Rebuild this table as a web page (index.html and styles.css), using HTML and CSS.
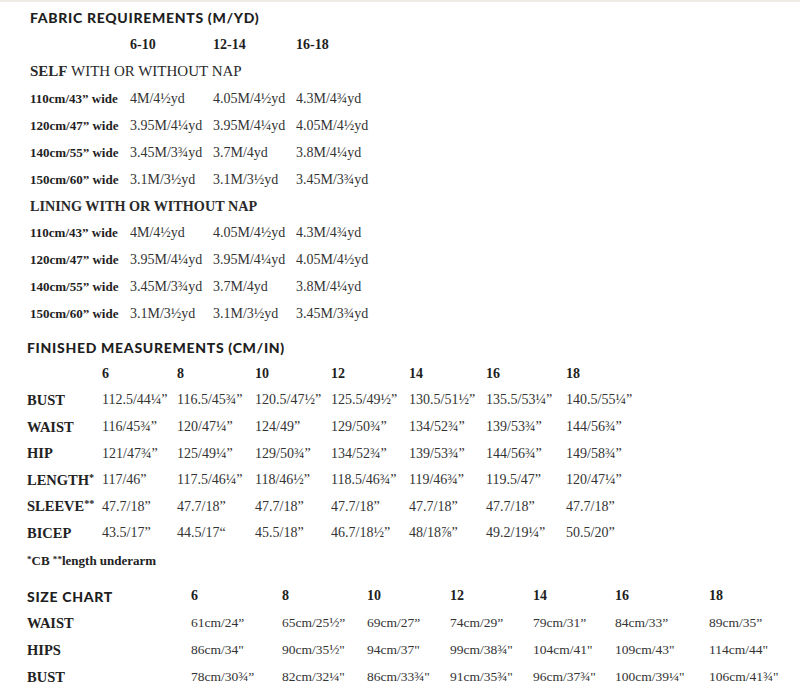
FILE: index.html
```html
<!DOCTYPE html>
<html>
<head>
<meta charset="utf-8">
<link rel="stylesheet" href="styles.css">
</head>
<body>
<div class="page">
  <section class="fabric">
    <div class="row"><h2 class="heading">FABRIC REQUIREMENTS (M/YD)</h2></div>
    <div class="row grid-fab"><span></span><b class="col">6-10</b><b class="col">12-14</b><b class="col">16-18</b></div>
    <div class="row"><span class="sub"><b>SELF</b> WITH OR WITHOUT NAP</span></div>
    <div class="row grid-fab"><b class="lbl">110cm/43” wide</b><span class="val">4M/4½yd</span><span class="val">4.05M/4½yd</span><span class="val">4.3M/4¾yd</span></div>
    <div class="row grid-fab"><b class="lbl">120cm/47” wide</b><span class="val">3.95M/4¼yd</span><span class="val">3.95M/4¼yd</span><span class="val">4.05M/4½yd</span></div>
    <div class="row grid-fab"><b class="lbl">140cm/55” wide</b><span class="val">3.45M/3¾yd</span><span class="val">3.7M/4yd</span><span class="val">3.8M/4¼yd</span></div>
    <div class="row grid-fab"><b class="lbl">150cm/60” wide</b><span class="val">3.1M/3½yd</span><span class="val">3.1M/3½yd</span><span class="val">3.45M/3¾yd</span></div>
    <div class="row row-lining"><span class="sub sub-bold">LINING WITH OR WITHOUT NAP</span></div>
    <div class="row grid-fab"><b class="lbl">110cm/43” wide</b><span class="val">4M/4½yd</span><span class="val">4.05M/4½yd</span><span class="val">4.3M/4¾yd</span></div>
    <div class="row grid-fab"><b class="lbl">120cm/47” wide</b><span class="val">3.95M/4¼yd</span><span class="val">3.95M/4¼yd</span><span class="val">4.05M/4½yd</span></div>
    <div class="row grid-fab"><b class="lbl">140cm/55” wide</b><span class="val">3.45M/3¾yd</span><span class="val">3.7M/4yd</span><span class="val">3.8M/4¼yd</span></div>
    <div class="row grid-fab"><b class="lbl">150cm/60” wide</b><span class="val">3.1M/3½yd</span><span class="val">3.1M/3½yd</span><span class="val">3.45M/3¾yd</span></div>
  </section>

  <section class="finished">
    <div class="row"><h2 class="heading">FINISHED MEASUREMENTS (CM/IN)</h2></div>
    <div class="row grid-fin"><span></span><b class="col">6</b><b class="col">8</b><b class="col">10</b><b class="col">12</b><b class="col">14</b><b class="col">16</b><b class="col">18</b></div>
    <div class="row grid-fin"><b class="mlbl">BUST</b><span class="val">112.5/44¼”</span><span class="val">116.5/45¾”</span><span class="val">120.5/47½”</span><span class="val">125.5/49½”</span><span class="val">130.5/51½”</span><span class="val">135.5/53¼”</span><span class="val">140.5/55¼”</span></div>
    <div class="row grid-fin"><b class="mlbl">WAIST</b><span class="val">116/45¾”</span><span class="val">120/47¼”</span><span class="val">124/49”</span><span class="val">129/50¾”</span><span class="val">134/52¾”</span><span class="val">139/53¾”</span><span class="val">144/56¾”</span></div>
    <div class="row grid-fin"><b class="mlbl">HIP</b><span class="val">121/47¾”</span><span class="val">125/49¼”</span><span class="val">129/50¾”</span><span class="val">134/52¾”</span><span class="val">139/53¾”</span><span class="val">144/56¾”</span><span class="val">149/58¾”</span></div>
    <div class="row grid-fin"><b class="mlbl">LENGTH<span class="ast">*</span></b><span class="val">117/46”</span><span class="val">117.5/46¼”</span><span class="val">118/46½”</span><span class="val">118.5/46¾”</span><span class="val">119/46¾”</span><span class="val">119.5/47”</span><span class="val">120/47¼”</span></div>
    <div class="row grid-fin"><b class="mlbl">SLEEVE<span class="ast">**</span></b><span class="val">47.7/18”</span><span class="val">47.7/18”</span><span class="val">47.7/18”</span><span class="val">47.7/18”</span><span class="val">47.7/18”</span><span class="val">47.7/18”</span><span class="val">47.7/18”</span></div>
    <div class="row grid-fin"><b class="mlbl">BICEP</b><span class="val">43.5/17”</span><span class="val">44.5/17“</span><span class="val">45.5/18”</span><span class="val">46.7/18½”</span><span class="val">48/18⅞”</span><span class="val">49.2/19¼”</span><span class="val">50.5/20”</span></div>
    <div class="row foot"><b class="note"><span class="ast">*</span>CB <span class="ast">**</span>length underarm</b></div>
  </section>

  <section class="size">
    <div class="row grid-size"><h2 class="heading">SIZE CHART</h2><b class="col">6</b><b class="col">8</b><b class="col">10</b><b class="col">12</b><b class="col">14</b><b class="col">16</b><b class="col">18</b></div>
    <div class="row grid-size"><b class="mlbl">WAIST</b><span class="val">61cm/24”</span><span class="val">65cm/25½”</span><span class="val">69cm/27”</span><span class="val">74cm/29”</span><span class="val">79cm/31”</span><span class="val">84cm/33”</span><span class="val">89cm/35”</span></div>
    <div class="row grid-size"><b class="mlbl">HIPS</b><span class="val">86cm/34"</span><span class="val">90cm/35½"</span><span class="val">94cm/37"</span><span class="val">99cm/38¾"</span><span class="val">104cm/41"</span><span class="val">109cm/43"</span><span class="val">114cm/44"</span></div>
    <div class="row grid-size"><b class="mlbl">BUST</b><span class="val">78cm/30¾”</span><span class="val">82cm/32¼"</span><span class="val">86cm/33¾"</span><span class="val">91cm/35¾"</span><span class="val">96cm/37¾"</span><span class="val">100cm/39¼"</span><span class="val">106cm/41¾"</span></div>
  </section>
</div>
</body>
</html>
```
FILE: styles.css
```css
html, body {
  margin: 0;
  padding: 0;
  background: #ffffff;
}

.page {
  border-top: 2px solid #eeebe5;
  padding-top: 2px;
  font-family: "Liberation Serif", "Times New Roman", serif;
  color: #222222;
}

.row {
  height: 27px;
  display: flex;
  align-items: center;
  white-space: nowrap;
}

.row-lining {
  height: 26px;
}

.heading {
  margin: 0;
  font-family: Lato, "Open Sans", sans-serif;
  font-weight: 900;
  font-size: 14px;
  letter-spacing: 0.7px;
  color: #1e1e1e;
}

.fabric {
  padding-left: 30px;
}

.finished,
.size {
  padding-left: 27px;
}

.finished {
  margin-top: 7px;
}

.finished .row {
  height: 26.6px;
}

.finished .foot {
  height: 28px;
}

.size {
  margin-top: 8px;
}

.grid-fab,
.grid-fin,
.grid-size {
  display: grid;
  align-items: center;
}

.grid-fab {
  grid-template-columns: 100px 83px 83px 83px;
}

.grid-fin {
  grid-template-columns: 75px 75px 78px 76px 78px 77px 80px 80px;
}

.grid-size {
  grid-template-columns: 164px 91px 85px 83px 83px 82px 94px 80px;
}

.col {
  font-weight: bold;
  font-size: 14px;
  color: #1e1e1e;
}

.sub {
  font-size: 15px;
  color: #2a2a2a;
}

.sub b {
  font-weight: bold;
}

.sub-bold {
  font-weight: bold;
  font-size: 14.2px;
}

.lbl {
  font-size: 13px;
  font-weight: bold;
  color: #1e1e1e;
}

.mlbl {
  font-size: 14.5px;
  font-weight: bold;
  color: #222222;
}

.ast {
  font-size: 0.7em;
  vertical-align: 0.35em;
}

.val {
  font-size: 14px;
  color: #333333;
}

.grid-size .val {
  font-size: 13.5px;
}

.note {
  font-size: 13px;
  font-weight: bold;
  color: #222222;
}
```
